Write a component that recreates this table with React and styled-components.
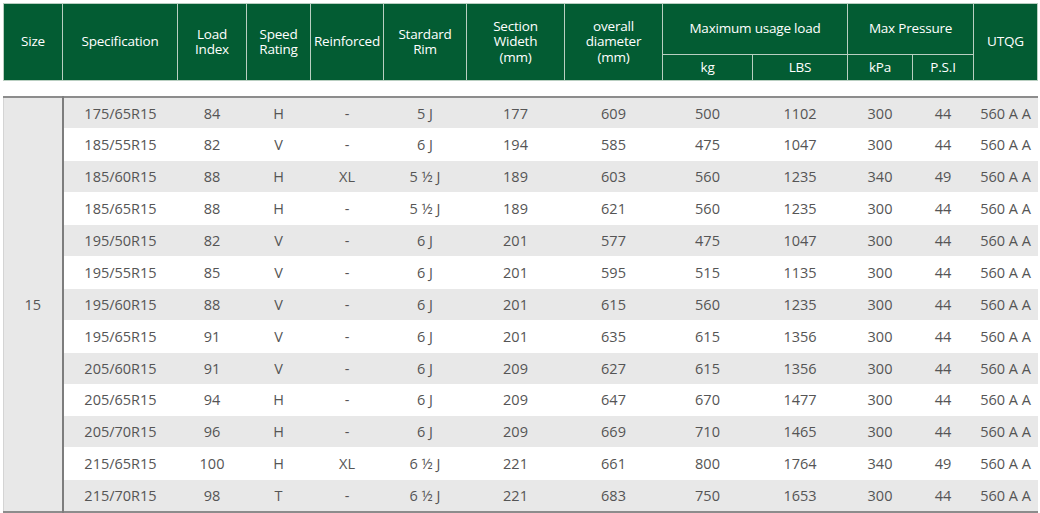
import React from 'react';
import styled, { createGlobalStyle } from 'styled-components';

const rows = [
  ['175/65R15', '84', 'H', '-', '5 J', '177', '609', '500', '1102', '300', '44', '560 A A'],
  ['185/55R15', '82', 'V', '-', '6 J', '194', '585', '475', '1047', '300', '44', '560 A A'],
  ['185/60R15', '88', 'H', 'XL', '5 ½ J', '189', '603', '560', '1235', '340', '49', '560 A A'],
  ['185/65R15', '88', 'H', '-', '5 ½ J', '189', '621', '560', '1235', '300', '44', '560 A A'],
  ['195/50R15', '82', 'V', '-', '6 J', '201', '577', '475', '1047', '300', '44', '560 A A'],
  ['195/55R15', '85', 'V', '-', '6 J', '201', '595', '515', '1135', '300', '44', '560 A A'],
  ['195/60R15', '88', 'V', '-', '6 J', '201', '615', '560', '1235', '300', '44', '560 A A'],
  ['195/65R15', '91', 'V', '-', '6 J', '201', '635', '615', '1356', '300', '44', '560 A A'],
  ['205/60R15', '91', 'V', '-', '6 J', '209', '627', '615', '1356', '300', '44', '560 A A'],
  ['205/65R15', '94', 'H', '-', '6 J', '209', '647', '670', '1477', '300', '44', '560 A A'],
  ['205/70R15', '96', 'H', '-', '6 J', '209', '669', '710', '1465', '300', '44', '560 A A'],
  ['215/65R15', '100', 'H', 'XL', '6 ½ J', '221', '661', '800', '1764', '340', '49', '560 A A'],
  ['215/70R15', '98', 'T', '-', '6 ½ J', '221', '683', '750', '1653', '300', '44', '560 A A'],
];

const widths = [59, 115, 69, 64, 73, 83, 98, 98, 90, 95, 65, 61, 64];

const Cols = () => (
  <colgroup>
    {widths.map((w, i) => (
      <col key={i} style={{ width: w }} />
    ))}
  </colgroup>
);

const App = () => {
  return (
    <>
      <GlobalStyle />
      <Page>
        <Table>
          <Cols />
          <thead>
            <TopRow>
              <Th rowSpan={2}>Size</Th>
              <Th rowSpan={2}>Specification</Th>
              <Th rowSpan={2}>Load<br />Index</Th>
              <Th rowSpan={2}>Speed<br />Rating</Th>
              <Th rowSpan={2}>Reinforced</Th>
              <Th rowSpan={2}>Stardard<br />Rim</Th>
              <Th rowSpan={2}>Section<br />Wideth<br />(mm)</Th>
              <Th rowSpan={2}>overall<br />diameter<br />(mm)</Th>
              <Th colSpan={2}>Maximum usage load</Th>
              <Th colSpan={2}>Max Pressure</Th>
              <Th rowSpan={2}>UTQG</Th>
            </TopRow>
            <SubRow>
              <Th>kg</Th>
              <Th>LBS</Th>
              <Th>kPa</Th>
              <Th>P.S.I</Th>
            </SubRow>
          </thead>
        </Table>
        <BodyTable>
          <Cols />
          <tbody>
            {rows.map((r, i) => (
              <Row key={r[0]} $shade={i % 2 === 0}>
                {i === 0 && <SizeCell rowSpan={rows.length}>15</SizeCell>}
                {r.map((v, j) => (
                  <Td key={j}>{v}</Td>
                ))}
              </Row>
            ))}
          </tbody>
        </BodyTable>
      </Page>
    </>
  );
};

export default App;

const GlobalStyle = createGlobalStyle`
  body {
    margin: 0;
    background: #ffffff;
    font-family: "Open Sans", "Noto Sans", sans-serif;
  }
`;

const Page = styled.div`
  width: 1034px;
  padding: 3px 3px 0 3px;
`;

const Table = styled.table`
  width: 1034px;
  table-layout: fixed;
  border-collapse: collapse;
`;

const BodyTable = styled(Table)`
  margin-top: 15px;
  border-top: 2px solid #8c8c8c;
  border-bottom: 2px solid #8c8c8c;
`;

const TopRow = styled.tr`
  height: 51px;
`;

const SubRow = styled.tr`
  height: 26px;
`;

const Th = styled.th`
  padding: 0;
  background: #035c33;
  color: #ffffff;
  font-weight: 400;
  font-size: 13.5px;
  line-height: 15.5px;
  letter-spacing: -0.2px;
  text-align: center;
  vertical-align: middle;
  border: 1px solid #b9cfc1;
`;

const Row = styled.tr`
  height: 31.9px;
  background: ${(p) => (p.$shade ? '#e8e8e8' : '#ffffff')};
`;

const Td = styled.td`
  padding: 0;
  color: #555555;
  font-size: 14.5px;
  text-align: center;
  vertical-align: middle;
  border-top: 1px solid #ffffff;
`;

const SizeCell = styled(Td)`
  background: #e8e8e8;
  border-left: 1px solid #d4d4d4;
  border-right: 2px solid #7d7d7d;
`;
